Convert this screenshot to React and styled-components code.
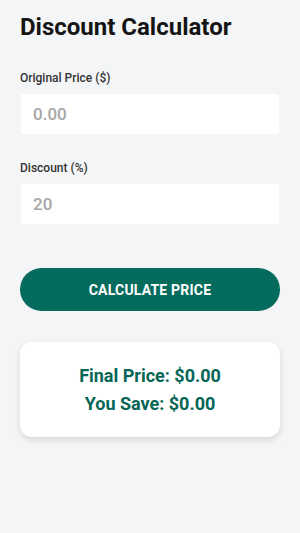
import React, { useState } from "react";
import styled, { createGlobalStyle } from "styled-components";

const Global = createGlobalStyle`
  html, body { margin: 0; padding: 0; background: #f4f5f7; }
  body { font-family: Roboto, "Noto Sans", sans-serif; }
  * { box-sizing: border-box; }
`;

const Page = styled.div`
  min-height: 533px;
  padding: 13px 20px 20px;
  display: flex;
  flex-direction: column;
`;

const Title = styled.h1`
  margin: 0 0 29px;
  font-size: 24px;
  line-height: 28px;
  font-weight: 700;
  color: #151515;
`;

const Field = styled.div`
  display: flex;
  flex-direction: column;
  gap: 8px;
  margin-bottom: ${(p) => p.$mb}px;
`;

const Label = styled.label`
  font-size: 12px;
  line-height: 16px;
  font-weight: 500;
  color: #333;
`;

const Input = styled.input`
  height: 40px;
  margin: 0 1px;
  border: none;
  outline: none;
  background: #fff;
  border-radius: 3px;
  padding: 0 12px;
  font-family: Roboto, sans-serif;
  font-size: 17px;
  font-weight: 500;
  color: #222;
  &::placeholder { color: #a6a6a6; }
`;

const Button = styled.button`
  height: 43px;
  border: none;
  border-radius: 22px;
  background: #046b5d;
  color: #fff;
  font-family: Roboto, sans-serif;
  font-weight: 700;
  font-size: 14px;
  letter-spacing: 0.2px;
  margin-bottom: 31px;
`;

const Card = styled.div`
  height: 95px;
  background: #fff;
  border-radius: 12px;
  box-shadow: 0 3px 6px rgba(0, 0, 0, 0.12);
  display: flex;
  flex-direction: column;
  align-items: center;
  justify-content: center;
`;

const Result = styled.div`
  font-size: 18px;
  line-height: 28px;
  font-weight: 700;
  color: #066656;
`;

export default function App() {
  const [price] = useState("");
  return (
    <>
      <Global />
      <Page>
        <Title>Discount Calculator</Title>
        <Field $mb={26}>
          <Label>Original Price ($)</Label>
          <Input placeholder="0.00" defaultValue={price} />
        </Field>
        <Field $mb={44}>
          <Label>Discount (%)</Label>
          <Input placeholder="20" />
        </Field>
        <Button>CALCULATE PRICE</Button>
        <Card>
          <Result>Final Price: $0.00</Result>
          <Result>You Save: $0.00</Result>
        </Card>
      </Page>
    </>
  );
}
